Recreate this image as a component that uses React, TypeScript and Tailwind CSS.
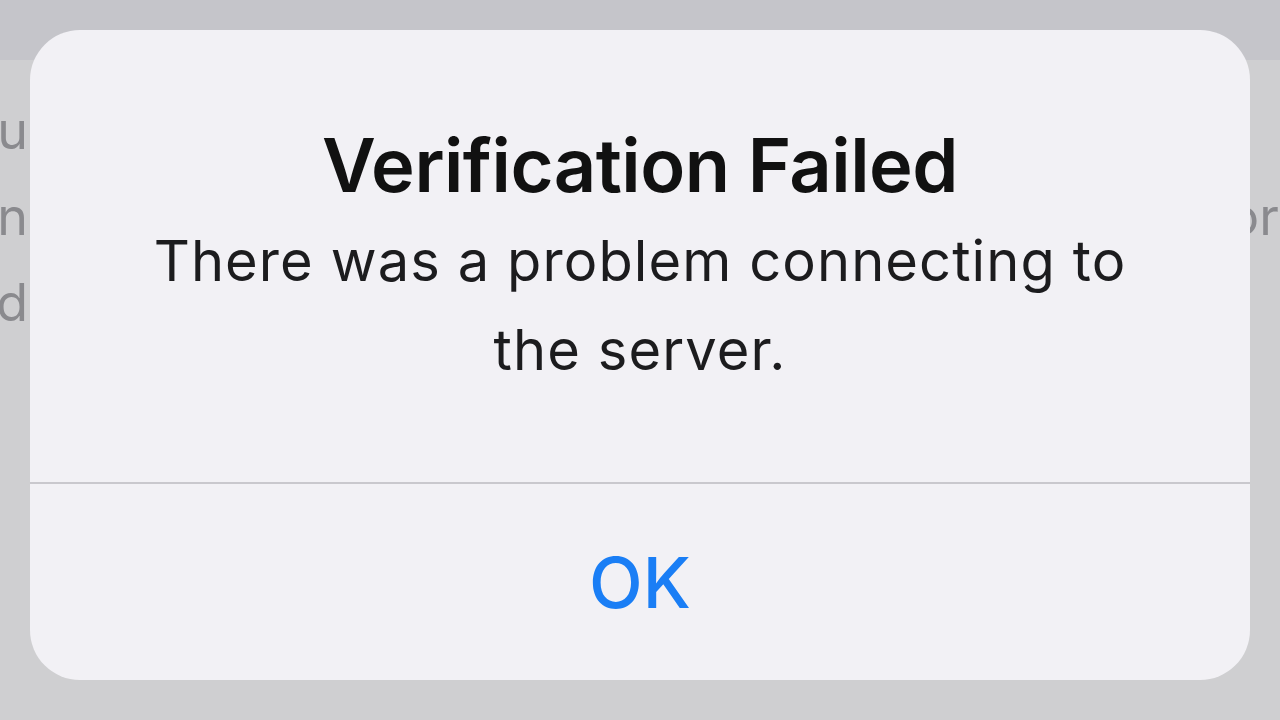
function BackdropRow({ left, right }: { left: string; right: string }) {
    return (
        <div className="flex justify-between h-[86px] items-center text-[52px] leading-none text-[#8a8a8e]">
            <span className="w-[28px] overflow-hidden whitespace-nowrap flex justify-end">{left}</span>
            <span className="w-[52px] overflow-hidden whitespace-nowrap">{right}</span>
        </div>
    )
}

export default function App() {
    return (
        <div
            className="relative w-[1280px] h-[720px] overflow-hidden bg-[#cfcfd1]"
            style={{ fontFamily: 'Inter, "Noto Sans", sans-serif' }}
        >
            <div className="h-[60px] bg-[#c5c5ca]" />

            {/* page text behind the alert */}
            <div className="flex flex-col pt-[28px]">
                <BackdropRow left="ou" right="" />
                <BackdropRow left="on" right="or" />
                <BackdropRow left="nd" right="" />
            </div>

            {/* alert */}
            <div className="absolute left-[30px] top-[30px] w-[1220px] h-[650px] rounded-[50px] bg-[#f2f1f5] flex flex-col overflow-hidden">
                <div className="h-[452px] flex flex-col items-center pt-[90px] text-center">
                    <h1 className="text-[74px] leading-[90px] font-semibold text-[#111111] tracking-[-0.5px]">
                        Verification Failed
                    </h1>
                    <p className="mt-[7px] text-[56px] leading-[89px] tracking-[1.1px] text-[#1c1c1e] w-[1020px]">
                        There was a problem connecting to the server.
                    </p>
                </div>
                <div className="h-[2px] bg-[#c9c8cd]" />
                <button className="flex-1 flex items-center justify-center text-[70px] font-medium text-[#1a7ef5]">
                    OK
                </button>
            </div>
        </div>
    )
}
